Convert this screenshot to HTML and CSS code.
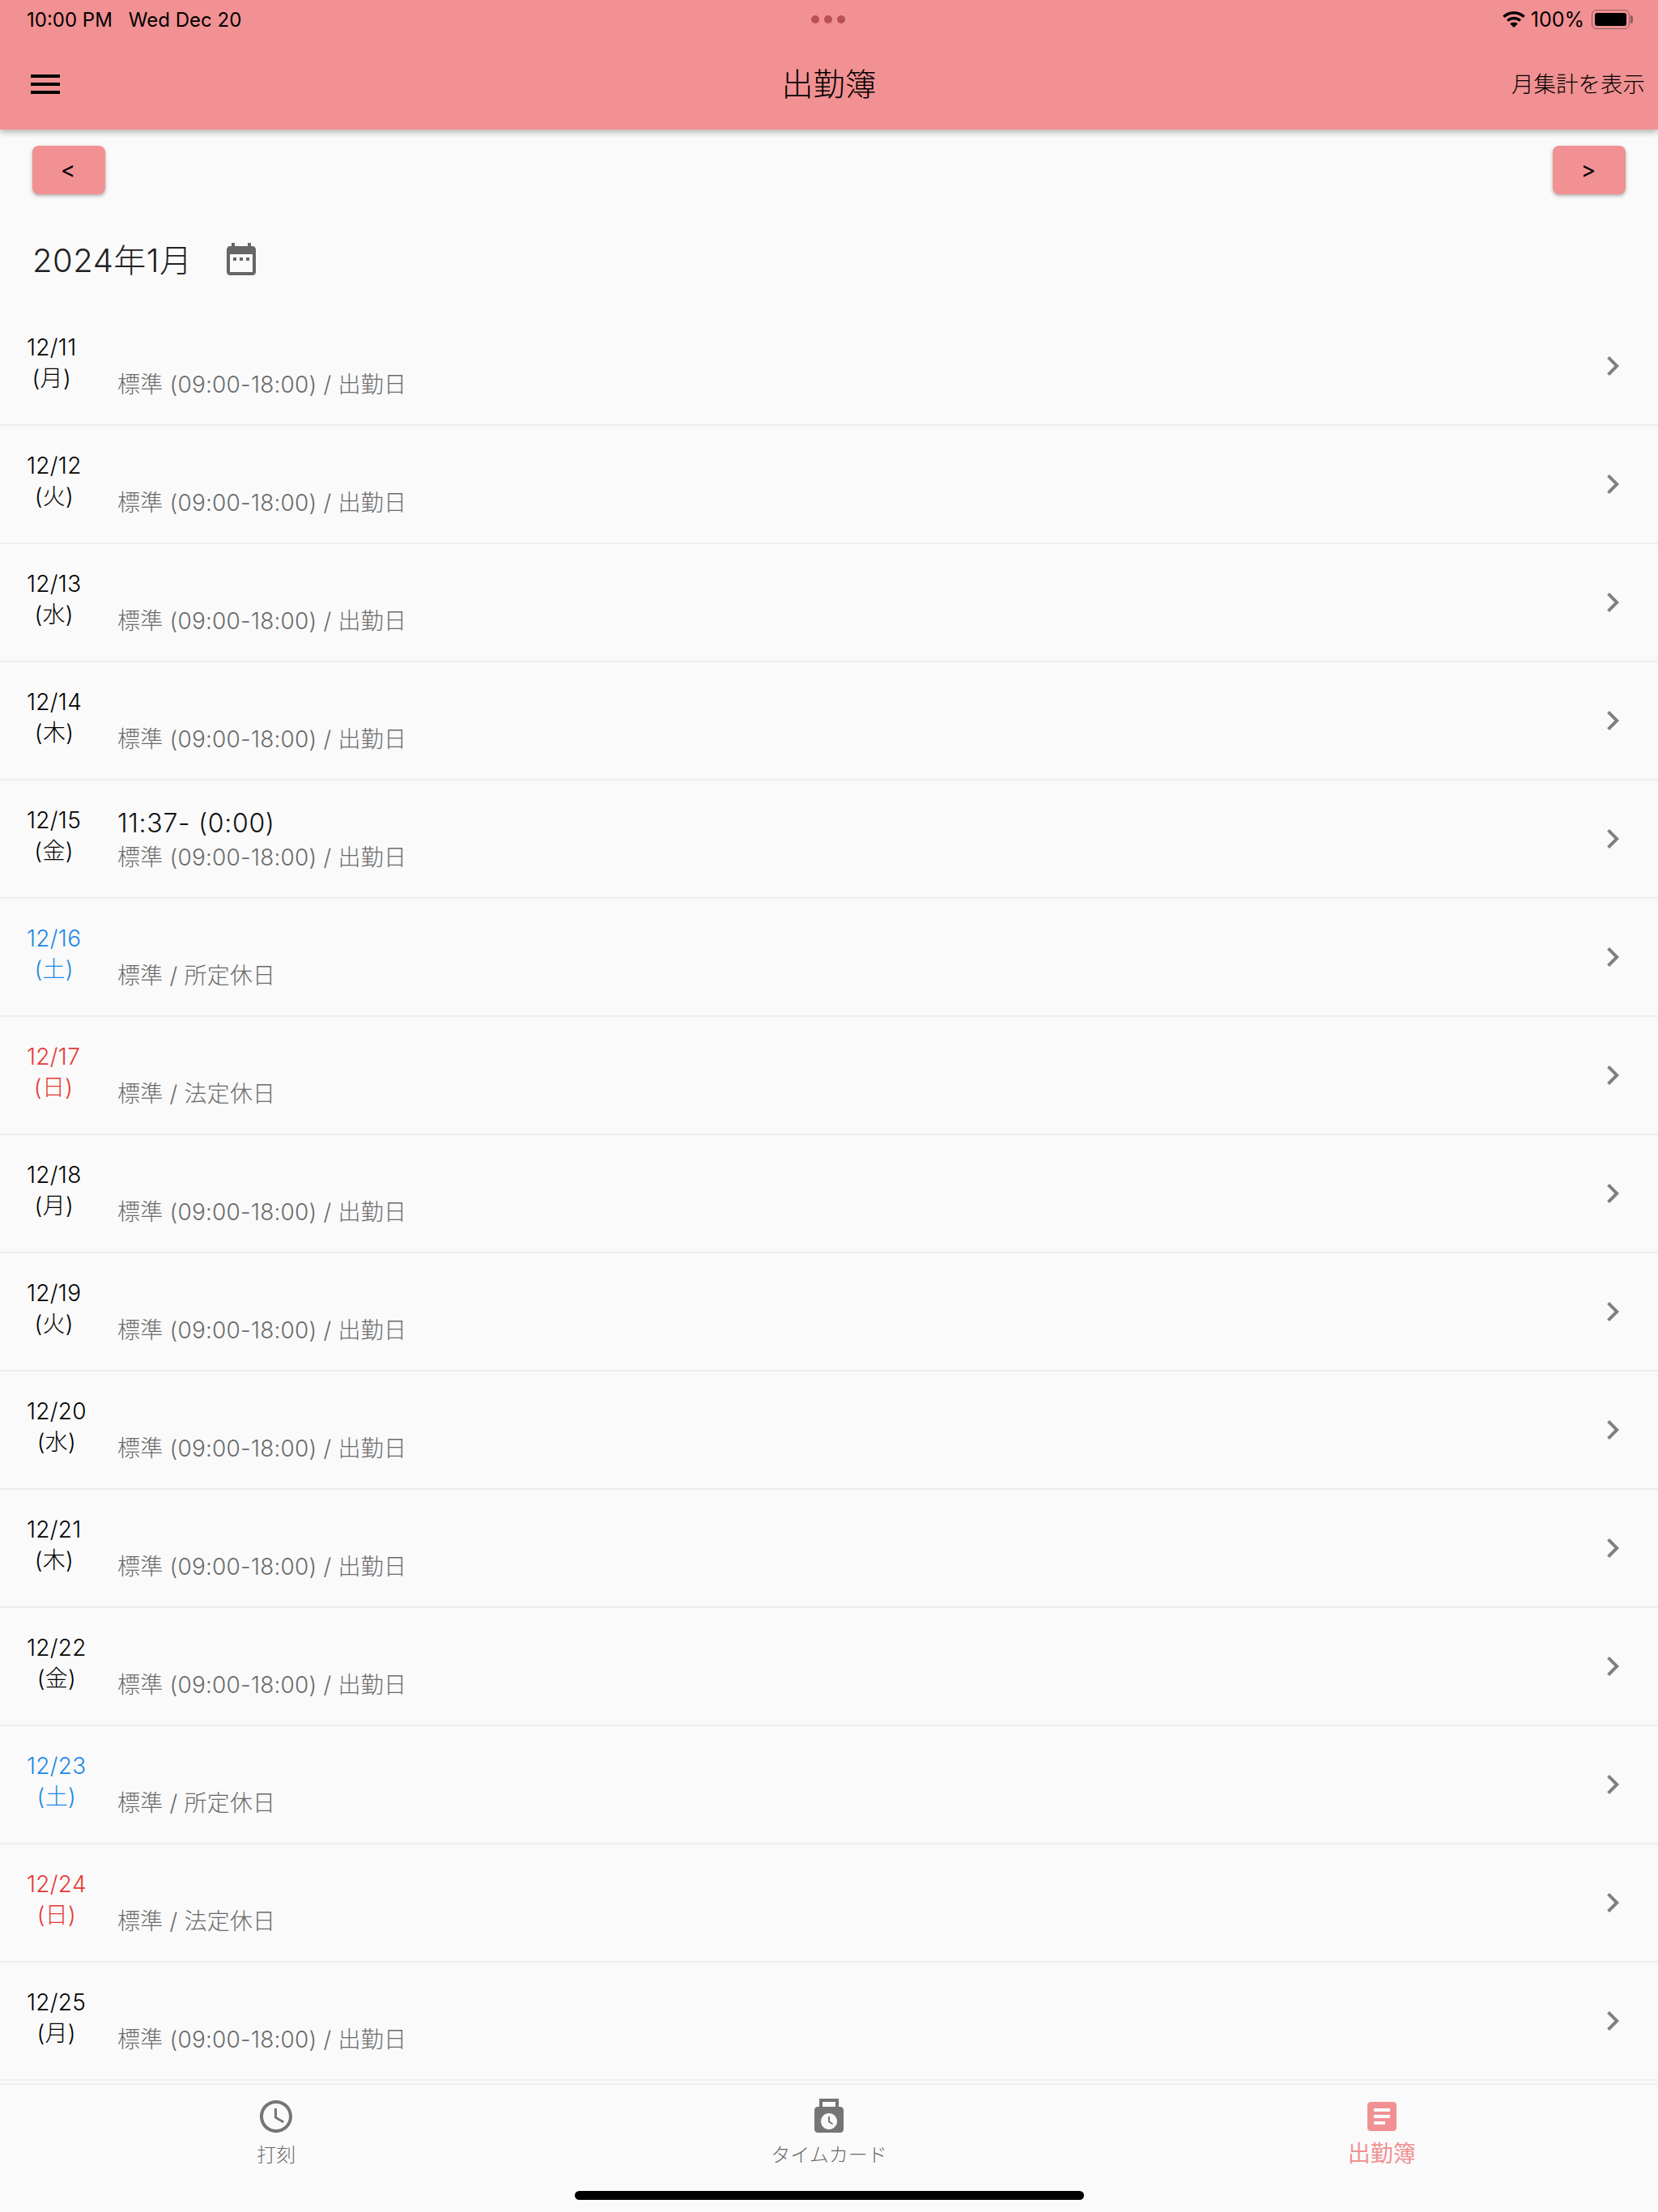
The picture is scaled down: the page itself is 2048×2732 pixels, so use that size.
FILE: index.html
```html
<!DOCTYPE html>
<html lang="ja">
<head>
    <meta charset="UTF-8">
    <meta name="viewport" content="width=device-width, initial-scale=1.0">
    <title>出勤簿</title>
    <link rel="stylesheet" href="styles.css">
</head>
<body>
    <header class="appbar">
        <div class="statusbar">
            <div class="status-left">
                <span>10:00 PM</span>
                <span>Wed Dec 20</span>
            </div>
            <div class="status-dots"><i></i><i></i><i></i></div>
            <div class="status-right">
                <svg class="wifi" viewBox="0 0 28 20"><path d="M14 0C8.6 0 3.8 2.1.2 5.6L2.6 8C5.6 5.100 9.600 3.400 14 3.400s8.400 1.700 11.400 4.600l2.400-2.400C24.200 2.100 19.400 0 14 0zM14 6.800c-3.500 0-6.600 1.300-9 3.600l2.400 2.400c1.700-1.600 4-2.600 6.600-2.600s4.900 1 6.600 2.600l2.400-2.400c-2.400-2.300-5.500-3.600-9-3.600zM14 13.600c-1.900 0-3.500.7-4.700 1.900L14 20l4.700-4.500c-1.200-1.200-2.800-1.900-4.700-1.900z"/></svg>
                <span class="battery-pct">100%</span>
                <div class="battery"><div class="battery-fill"></div></div>
            </div>
        </div>
        <div class="toolbar">
            <div class="toolbar-left">
                <svg class="icon" viewBox="0 0 24 24"><path d="M3 18h18v-2H3v2zm0-5h18v-2H3v2zm0-7v2h18V6H3z"/></svg>
            </div>
            <div class="toolbar-title">出勤簿</div>
            <div class="toolbar-action">月集計を表示</div>
        </div>
    </header>

    <main>
        <div class="pager">
            <button type="button" class="page-btn">&lt;</button>
            <button type="button" class="page-btn">&gt;</button>
        </div>
        <div class="month">
            <span class="month-label">2024年1月</span>
            <svg class="icon month-icon" viewBox="0 0 24 24"><path d="M9 11H7v2h2v-2zm4 0h-2v2h2v-2zm4 0h-2v2h2v-2zm2-7h-1V2h-2v2H8V2H6v2H5c-1.110 0-1.990.9-1.990 2L3 20c0 1.100.89 2 2 2h14c1.100 0 2-.9 2-2V6c0-1.100-.9-2-2-2zm0 16H5V9h14v11z"/></svg>
        </div>

        <ul class="days">
            <li class="day">
                <div class="date-col"><div class="date">12/11<br>(月)</div></div>
                <div class="info"><div class="worked"></div><div class="shift">標準 (09:00-18:00) / 出勤日</div></div>
                <svg class="icon chevron" viewBox="0 0 24 24"><path d="M10 6L8.590 7.410 13.170 12l-4.580 4.590L10 18l6-6z"/></svg>
            </li>
            <li class="day">
                <div class="date-col"><div class="date">12/12<br>(火)</div></div>
                <div class="info"><div class="worked"></div><div class="shift">標準 (09:00-18:00) / 出勤日</div></div>
                <svg class="icon chevron" viewBox="0 0 24 24"><path d="M10 6L8.590 7.410 13.170 12l-4.580 4.590L10 18l6-6z"/></svg>
            </li>
            <li class="day">
                <div class="date-col"><div class="date">12/13<br>(水)</div></div>
                <div class="info"><div class="worked"></div><div class="shift">標準 (09:00-18:00) / 出勤日</div></div>
                <svg class="icon chevron" viewBox="0 0 24 24"><path d="M10 6L8.590 7.410 13.170 12l-4.580 4.590L10 18l6-6z"/></svg>
            </li>
            <li class="day">
                <div class="date-col"><div class="date">12/14<br>(木)</div></div>
                <div class="info"><div class="worked"></div><div class="shift">標準 (09:00-18:00) / 出勤日</div></div>
                <svg class="icon chevron" viewBox="0 0 24 24"><path d="M10 6L8.590 7.410 13.170 12l-4.580 4.590L10 18l6-6z"/></svg>
            </li>
            <li class="day">
                <div class="date-col"><div class="date">12/15<br>(金)</div></div>
                <div class="info"><div class="worked">11:37- (0:00)</div><div class="shift">標準 (09:00-18:00) / 出勤日</div></div>
                <svg class="icon chevron" viewBox="0 0 24 24"><path d="M10 6L8.590 7.410 13.170 12l-4.580 4.590L10 18l6-6z"/></svg>
            </li>
            <li class="day sat">
                <div class="date-col"><div class="date">12/16<br>(土)</div></div>
                <div class="info"><div class="worked"></div><div class="shift">標準 / 所定休日</div></div>
                <svg class="icon chevron" viewBox="0 0 24 24"><path d="M10 6L8.590 7.410 13.170 12l-4.580 4.590L10 18l6-6z"/></svg>
            </li>
            <li class="day sun">
                <div class="date-col"><div class="date">12/17<br>(日)</div></div>
                <div class="info"><div class="worked"></div><div class="shift">標準 / 法定休日</div></div>
                <svg class="icon chevron" viewBox="0 0 24 24"><path d="M10 6L8.590 7.410 13.170 12l-4.580 4.590L10 18l6-6z"/></svg>
            </li>
            <li class="day">
                <div class="date-col"><div class="date">12/18<br>(月)</div></div>
                <div class="info"><div class="worked"></div><div class="shift">標準 (09:00-18:00) / 出勤日</div></div>
                <svg class="icon chevron" viewBox="0 0 24 24"><path d="M10 6L8.590 7.410 13.170 12l-4.580 4.590L10 18l6-6z"/></svg>
            </li>
            <li class="day">
                <div class="date-col"><div class="date">12/19<br>(火)</div></div>
                <div class="info"><div class="worked"></div><div class="shift">標準 (09:00-18:00) / 出勤日</div></div>
                <svg class="icon chevron" viewBox="0 0 24 24"><path d="M10 6L8.590 7.410 13.170 12l-4.580 4.590L10 18l6-6z"/></svg>
            </li>
            <li class="day">
                <div class="date-col"><div class="date">12/20<br>(水)</div></div>
                <div class="info"><div class="worked"></div><div class="shift">標準 (09:00-18:00) / 出勤日</div></div>
                <svg class="icon chevron" viewBox="0 0 24 24"><path d="M10 6L8.590 7.410 13.170 12l-4.580 4.590L10 18l6-6z"/></svg>
            </li>
            <li class="day">
                <div class="date-col"><div class="date">12/21<br>(木)</div></div>
                <div class="info"><div class="worked"></div><div class="shift">標準 (09:00-18:00) / 出勤日</div></div>
                <svg class="icon chevron" viewBox="0 0 24 24"><path d="M10 6L8.590 7.410 13.170 12l-4.580 4.590L10 18l6-6z"/></svg>
            </li>
            <li class="day">
                <div class="date-col"><div class="date">12/22<br>(金)</div></div>
                <div class="info"><div class="worked"></div><div class="shift">標準 (09:00-18:00) / 出勤日</div></div>
                <svg class="icon chevron" viewBox="0 0 24 24"><path d="M10 6L8.590 7.410 13.170 12l-4.580 4.590L10 18l6-6z"/></svg>
            </li>
            <li class="day sat">
                <div class="date-col"><div class="date">12/23<br>(土)</div></div>
                <div class="info"><div class="worked"></div><div class="shift">標準 / 所定休日</div></div>
                <svg class="icon chevron" viewBox="0 0 24 24"><path d="M10 6L8.590 7.410 13.170 12l-4.580 4.590L10 18l6-6z"/></svg>
            </li>
            <li class="day sun">
                <div class="date-col"><div class="date">12/24<br>(日)</div></div>
                <div class="info"><div class="worked"></div><div class="shift">標準 / 法定休日</div></div>
                <svg class="icon chevron" viewBox="0 0 24 24"><path d="M10 6L8.590 7.410 13.170 12l-4.580 4.590L10 18l6-6z"/></svg>
            </li>
            <li class="day">
                <div class="date-col"><div class="date">12/25<br>(月)</div></div>
                <div class="info"><div class="worked"></div><div class="shift">標準 (09:00-18:00) / 出勤日</div></div>
                <svg class="icon chevron" viewBox="0 0 24 24"><path d="M10 6L8.590 7.410 13.170 12l-4.580 4.590L10 18l6-6z"/></svg>
            </li>
        </ul>
    </main>

    <nav class="tabbar">
        <a class="tab">
            <svg class="icon" viewBox="0 0 24 24"><path d="M11.990 2C6.470 2 2 6.480 2 12s4.470 10 9.990 10C17.520 22 22 17.520 22 12S17.520 2 11.990 2zM12 20c-4.420 0-8-3.580-8-8s3.580-8 8-8 8 3.580 8 8-3.580 8-8 8zm.5-13H11v6l5.250 3.150.75-1.230-4.500-2.670z"/></svg>
            <span>打刻</span>
        </a>
        <a class="tab">
            <svg class="icon" viewBox="0 0 24 24"><path d="M19 6h-1V1H6v5H5C3.900 6 3 6.900 3 8v12c0 1.100.9 2 2 2h14c1.100 0 2-.9 2-2V8c0-1.100-.9-2-2-2zM8 3h8v3H8V3zm4 17c-2.760 0-5-2.240-5-5s2.240-5 5-5 5 2.240 5 5-2.240 5-5 5z"/><path d="M12.500 12h-1v3.500l2.500 1.500.5-.8-2-1.200z"/></svg>
            <span>タイムカード</span>
        </a>
        <a class="tab active">
            <svg class="icon" viewBox="0 0 24 24"><path d="M19 3H5c-1.100 0-2 .9-2 2v14c0 1.100.9 2 2 2h14c1.100 0 2-.9 2-2V5c0-1.100-.9-2-2-2zm-5 14H7v-2h7v2zm3-4H7v-2h10v2zm0-4H7V7h10v2z"/></svg>
            <span>出勤簿</span>
        </a>
        <div class="home-indicator"></div>
    </nav>
</body>
</html>
```

FILE: styles.css
```css
* {
    box-sizing: border-box;
}

body {
    font-family: Inter, "Noto Sans CJK JP", sans-serif;
    background-color: #fafafa;
    color: #000;
    margin: 0;
    height: 2732px;
    display: flex;
    flex-direction: column;
    overflow: hidden;
}

.icon {
    display: block;
    width: 48px;
    height: 48px;
    fill: currentColor;
    flex: none;
}

/* app bar */
.appbar {
    height: 160px;
    flex: none;
    background-color: #f19193;
    box-shadow: 0 3px 8px rgba(0, 0, 0, 0.3);
    position: relative;
    z-index: 1;
}

.statusbar {
    height: 48px;
    display: grid;
    grid-template-columns: 1fr auto 1fr;
    align-items: center;
    padding: 0 35px 0 33px;
    font-size: 24px;
}

.status-left {
    display: flex;
    gap: 20px;
}

.status-dots {
    display: flex;
    gap: 6px;
}

.status-dots i {
    width: 10px;
    height: 10px;
    border-radius: 50%;
    background-color: #b85055;
}

.status-right {
    display: flex;
    justify-content: flex-end;
    align-items: center;
}

.wifi {
    width: 28px;
    height: 20px;
    margin-right: 7px;
}

.battery-pct {
    font-size: 25px;
}

.battery {
    width: 47px;
    height: 24px;
    margin-left: 9px;
    padding: 3px;
    border: 1px solid #8f5a5e;
    border-radius: 6px;
    position: relative;
}

.battery::after {
    content: "";
    position: absolute;
    top: 6px;
    right: -5px;
    width: 3px;
    height: 10px;
    background-color: #8f5a5e;
    border-radius: 0 3px 3px 0;
}

.battery-fill {
    height: 100%;
    background-color: #000;
    border-radius: 3px;
}

.toolbar {
    height: 112px;
    display: grid;
    grid-template-columns: 1fr auto 1fr;
    align-items: center;
    padding: 0 16px;
}

.toolbar-left {
    padding-left: 16px;
}

.toolbar-title {
    font-size: 39px;
    font-weight: 300;
    margin-top: -6px;
}

.toolbar-action {
    font-size: 27.5px;
    font-weight: 300;
    text-align: right;
    margin-top: -4px;
}

/* month header */
main {
    flex: 1;
    min-height: 0;
}

.pager {
    display: flex;
    justify-content: space-between;
    padding: 20px 40px 0;
}

.page-btn {
    width: 90px;
    height: 60px;
    background-color: #f19193;
    color: #000;
    border: none;
    border-radius: 8px;
    box-shadow: 0 2px 4px rgba(0, 0, 0, 0.3);
    font-family: inherit;
    font-size: 28px;
    padding: 0 2px 0 0;
}

.month {
    height: 140px;
    display: flex;
    align-items: center;
    padding: 20px 0 0 40px;
}

.month-label {
    font-size: 40px;
    font-weight: 300;
    letter-spacing: 0.5px;
    color: #212121;
    width: 234px;
    margin-top: -3px;
}

.month-icon {
    color: #666;
}

/* day rows */
.days {
    list-style: none;
    margin: 0;
    padding: 0;
}

.day {
    height: 146px;
    display: flex;
    align-items: flex-start;
    padding-left: 33px;
    padding-right: 32px;
    border-bottom: 2px solid #eee;
}

.date-col {
    width: 112px;
    flex: none;
    padding-top: 30px;
    font-size: 28px;
    font-weight: 300;
    letter-spacing: 0.3px;
    line-height: 38px;
}

.date {
    width: fit-content;
    text-align: center;
}

.sat .date {
    color: #1e88e5;
}

.sun .date {
    color: #e53935;
}

.info {
    flex: 1;
    padding-top: 32px;
    font-weight: 300;
}

.worked {
    height: 42px;
    font-size: 32px;
    letter-spacing: 0.7px;
    line-height: 42px;
    color: #111;
}

.shift {
    font-size: 28px;
    letter-spacing: 0.2px;
    line-height: 42px;
    color: #6b6b6b;
}

.chevron {
    color: #7f7f7f;
    margin-top: 48px;
}

/* bottom tabs */
.tabbar {
    height: 157px;
    flex: none;
    display: grid;
    grid-template-columns: repeat(3, 1fr);
    background-color: #fafafa;
    box-shadow: 0 -1px 3px rgba(0, 0, 0, 0.08);
    position: relative;
}

.tab {
    display: flex;
    flex-direction: column;
    align-items: center;
    padding-top: 15px;
    color: #6b6b6b;
    font-size: 24px;
    font-weight: 300;
    line-height: 36px;
}

.tab span {
    margin-top: 6px;
}

.tab svg {
    color: #757575;
}

.tab.active {
    color: #f19193;
    font-size: 28px;
    font-weight: 400;
}

.tab.active svg {
    color: #f19193;
}

.tab.active span {
    margin-top: 4px;
}

.home-indicator {
    position: absolute;
    left: 710px;
    bottom: 15px;
    width: 629px;
    height: 11px;
    background-color: #000;
    border-radius: 6px;
}
```
